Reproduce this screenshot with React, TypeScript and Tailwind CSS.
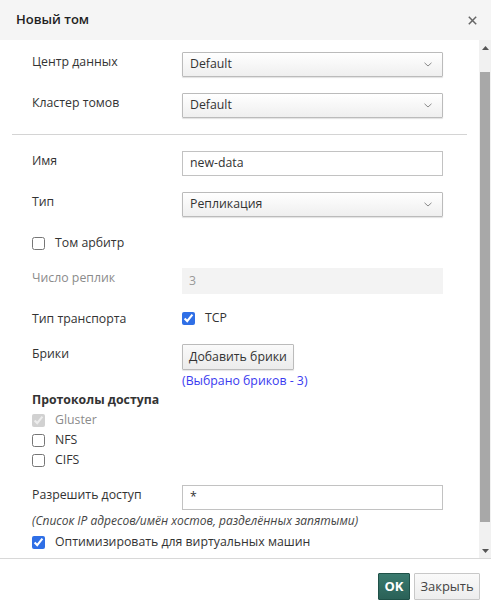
import type { ReactNode } from "react";

const font = { fontFamily: '"Open Sans", "Noto Sans", sans-serif' };

function Chevron() {
  return (
    <svg width="8" height="5" viewBox="0 0 8 5" className="text-[#8a8a8a]">
      <path d="M0.5 0.8 L4 4 L7.5 0.8" fill="none" stroke="currentColor" strokeWidth="1" />
    </svg>
  );
}

function Select({ value }: { value: string }) {
  return (
    <div className="flex h-[25px] w-[261px] items-center justify-between rounded-[1px] border border-[#bbbbbb] bg-gradient-to-b from-white to-[#efefef] pl-[7px] pr-[10px] text-[12.3px] text-[#333] shadow-[0_1px_1px_rgba(0,0,0,0.12)]">
      <span>{value}</span>
      <Chevron />
    </div>
  );
}

function TextInput({ value, disabled }: { value: string; disabled?: boolean }) {
  return (
    <div
      className={
        disabled
          ? "flex h-[26px] w-[261px] items-center bg-[#f3f3f3] pl-[7px] text-[12.3px] text-[#999]"
          : "flex h-[25px] w-[261px] items-center border border-[#c2c2c2] bg-white pl-[7px] text-[12.3px] text-[#333]"
      }
    >
      {value}
    </div>
  );
}

function Row({
  label,
  muted,
  children,
  className,
}: {
  label: string;
  muted?: boolean;
  children: ReactNode;
  className?: string;
}) {
  return (
    <div className={`flex items-start ${className ?? ""}`}>
      <div
        className={`w-[150px] shrink-0 pt-[1px] text-[12.3px] leading-[18px] ${
          muted ? "text-[#8b8b8b]" : "text-[#333]"
        }`}
      >
        {label}
      </div>
      {children}
    </div>
  );
}

function Check({
  label,
  checked,
  disabled,
  className,
}: {
  label: string;
  checked?: boolean;
  disabled?: boolean;
  className?: string;
}) {
  return (
    <label className={`flex items-center gap-[10px] text-[12.3px] leading-[18px] ${className ?? ""}`}>
      <input
        type="checkbox"
        defaultChecked={checked}
        disabled={disabled}
        className="m-0 h-[13px] w-[13px] accent-[#2f6fe6]"
      />
      <span className={disabled ? "text-[#8b8b8b]" : "text-[#333]"}>{label}</span>
    </label>
  );
}

export default function App() {
  return (
    <div className="flex h-[613px] w-[491px] flex-col bg-white" style={font}>
      <div className="flex h-10 shrink-0 items-center justify-between bg-[#f5f5f5] pl-4 pr-[14px]">
        <span className="text-[13px] font-semibold text-[#222]">Новый том</span>
        <svg width="9" height="9" viewBox="0 0 9 9" className="text-[#666]">
          <path d="M0.8 0.8 L8.2 8.2 M8.2 0.8 L0.8 8.2" stroke="currentColor" strokeWidth="1.5" />
        </svg>
      </div>

      <div className="flex h-[518px] shrink-0">
        <div className="flex-1 pt-3">
          <div className="px-8">
            <Row label="Центр данных">
              <Select value="Default" />
            </Row>
            <Row label="Кластер томов" className="mt-4">
              <Select value="Default" />
            </Row>
          </div>
          <div className="mx-3 mt-4 h-px bg-[#d4d4d4]" />
          <div className="px-8 pt-4">
            <Row label="Имя">
              <TextInput value="new-data" />
            </Row>
            <Row label="Тип" className="mt-4">
              <Select value="Репликация" />
            </Row>
            <Check label="Том арбитр" className="mt-[17px]" />
            <Row label="Число реплик" muted className="mt-[16px]">
              <TextInput value="3" disabled />
            </Row>
            <Row label="Тип транспорта" className="mt-[15px]">
              <Check label="TCP" checked />
            </Row>
            <Row label="Брики" className="mt-4">
              <div className="flex flex-col items-start">
                <button className="h-[26px] rounded-[1px] border border-[#bbbbbb] bg-gradient-to-b from-[#fafafa] to-[#ececec] px-[6px] text-[12.3px] text-[#333] shadow-[0_1px_1px_rgba(0,0,0,0.1)]">
                  Добавить брики
                </button>
                <span className="mt-[2px] text-[12.3px] leading-[18px] text-[#3a3af0]">
                  (Выбрано бриков - 3)
                </span>
              </div>
            </Row>
            <div className="mt-[1px] text-[12.3px] font-bold leading-[18px] text-[#333]">
              Протоколы доступа
            </div>
            <Check label="Gluster" checked disabled className="mt-[2px]" />
            <Check label="NFS" className="mt-[2px]" />
            <Check label="CIFS" className="mt-[2px]" />
            <Row label="Разрешить доступ" className="mt-[16px]">
              <TextInput value="*" />
            </Row>
            <div className="mt-[2px] text-[12px] italic leading-[18px] text-[#444]">
              (Список IP адресов/имён хостов, разделённых запятыми)
            </div>
            <Check label="Оптимизировать для виртуальных машин" checked className="mt-[3px]" />
          </div>
        </div>

        <div className="flex w-3 shrink-0 flex-col items-stretch bg-[#f1f1f1]">
          <div className="flex h-[15px] items-center justify-center">
            <svg width="7" height="4" viewBox="0 0 7 4">
              <path d="M0 4 L3.5 0 L7 4 Z" fill="#555" />
            </svg>
          </div>
          <div className="mx-[1px] mt-[17px] h-[450px] bg-[#a8a8a8]" />
          <div className="flex-1" />
          <div className="flex h-[15px] items-center justify-center">
            <svg width="7" height="4" viewBox="0 0 7 4">
              <path d="M0 0 L7 0 L3.5 4 Z" fill="#555" />
            </svg>
          </div>
        </div>
      </div>

      <div className="flex flex-1 items-start justify-end gap-1 border-t border-[#d8d8d8] pr-[11px] pt-[14px]">
        <button className="h-[27px] w-[32px] rounded-[1px] border border-[#1f5148] bg-gradient-to-b from-[#3a7a6f] to-[#2a6157] text-[13px] font-bold text-white">
          OK
        </button>
        <button className="h-[27px] w-[66px] rounded-[1px] border border-[#c8c8c8] bg-gradient-to-b from-[#fafafa] to-[#ededed] text-[13px] text-[#444]">
          Закрыть
        </button>
      </div>
    </div>
  );
}
